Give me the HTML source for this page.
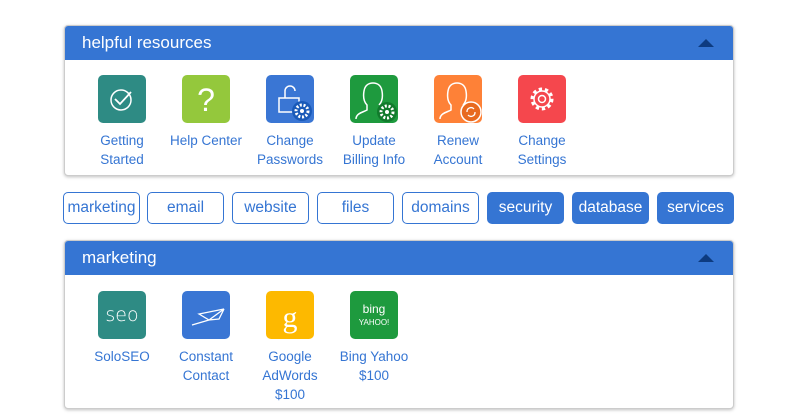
<!DOCTYPE html>
<html><head><style>
*{box-sizing:border-box;margin:0;padding:0}
body{width:800px;height:417px;background:#fff;font-family:"Liberation Sans",sans-serif;position:relative;overflow:hidden}
.panel{position:absolute;left:64px;width:670px;border:1px solid #ccc;border-radius:4px;box-shadow:0 1px 3px rgba(0,0,0,.25);overflow:hidden;background:#fff}
.hd{height:34px;background:#3575d3;color:#fff;font-size:17px;line-height:34px;padding-left:17px;position:relative}
.hd:after{content:"";position:absolute;right:19px;top:13px;border-left:8px solid transparent;border-right:8px solid transparent;border-bottom:8px solid #0d3b80}
.it{position:absolute;width:84px;text-align:center;color:#3575d3;font-size:13.5px;line-height:19px}
.ic{width:48px;height:48px;border-radius:5px;margin:0 auto 8px;position:relative;overflow:hidden}
.ic svg{position:absolute;left:0;top:0}
.btn{position:absolute;top:192px;height:32px;width:77px;border:1px solid #3575d3;border-radius:5px;color:#3575d3;font-size:15.5px;line-height:30px;text-align:center}
.btn.f{background:#3575d3;color:#fff}
</style></head><body>
<div class="panel" style="top:25px;height:151px">
<div class="hd">helpful resources</div>
<div class="it" style="left:15px;top:49px"><div class="ic" style="background:#2e8b84"><svg width="48" height="48"><circle cx="23" cy="25" r="10" fill="none" stroke="#fff" stroke-width="1.5"/><path d="M17 24l5 5 11-12" fill="none" stroke="#fff" stroke-width="1.8"/></svg></div>Getting<br>Started</div>
<div class="it" style="left:99px;top:49px"><div class="ic" style="background:#94c83c"><svg width="48" height="48"><text x="24" y="36" font-size="32" fill="#fff" text-anchor="middle" font-family="Liberation Sans">?</text></svg></div>Help Center</div>
<div class="it" style="left:183px;top:49px"><div class="ic" style="background:#3a76d4"><svg width="48" height="48"><path d="M19 23v-7a5 5 0 0 1 10 0" fill="none" stroke="#fff" stroke-width="1.5"/><rect x="13" y="23" width="20" height="14" fill="none" stroke="#fff" stroke-width="1.5"/><circle cx="36" cy="36" r="10" fill="#1a5ab8"/><circle cx="36" cy="36" r="6" fill="none" stroke="#fff" stroke-width="3" stroke-dasharray="2 1.7"/><circle cx="36" cy="36" r="2" fill="#fff"/></svg></div>Change<br>Passwords</div>
<div class="it" style="left:267px;top:49px"><div class="ic" style="background:#1e9a3e"><svg width="48" height="48"><path d="M6 44c0-6 8-7 11-9v-5c-3-3-4-8-3-14 1-6 5-8 9-8s8 2 9 8c1 6 0 11-3 14" fill="none" stroke="#fff" stroke-width="1.5"/><circle cx="37" cy="37" r="10" fill="#117a2c"/><circle cx="37" cy="37" r="6" fill="none" stroke="#fff" stroke-width="3" stroke-dasharray="2 1.7"/><circle cx="37" cy="37" r="2" fill="#fff"/></svg></div>Update<br>Billing Info</div>
<div class="it" style="left:351px;top:49px"><div class="ic" style="background:#fe8137"><svg width="48" height="48"><path d="M6 44c0-6 8-7 11-9v-5c-3-3-4-8-3-14 1-6 5-8 9-8s8 2 9 8c1 6 0 11-3 14" fill="none" stroke="#fff" stroke-width="1.5"/><circle cx="37" cy="37" r="10" fill="#e86a20" stroke="#fff" stroke-width="1.5"/><path d="M33 37a4 4 0 0 1 7-3M41 37a4 4 0 0 1-7 3" fill="none" stroke="#fff" stroke-width="1.3"/></svg></div>Renew<br>Account</div>
<div class="it" style="left:435px;top:49px"><div class="ic" style="background:#f5474d"><svg width="48" height="48"><circle cx="24" cy="24" r="9" fill="none" stroke="#fff" stroke-width="5" stroke-dasharray="3 2.6"/><circle cx="24" cy="24" r="8" fill="#f5474d" stroke="#fff" stroke-width="1.5"/><circle cx="24" cy="24" r="3.5" fill="none" stroke="#fff" stroke-width="1.5"/></svg></div>Change<br>Settings</div>
</div>
<div class="btn" style="left:63px">marketing</div>
<div class="btn" style="left:147px">email</div>
<div class="btn" style="left:232px">website</div>
<div class="btn" style="left:317px">files</div>
<div class="btn" style="left:402px">domains</div>
<div class="btn f" style="left:487px">security</div>
<div class="btn f" style="left:572px">database</div>
<div class="btn f" style="left:657px">services</div>
<div class="panel" style="top:240px;height:169px">
<div class="hd">marketing</div>
<div class="it" style="left:15px;top:50px"><div class="ic" style="background:#2e8b84"><svg width="48" height="48"><text x="24" y="30" font-size="19" fill="#fff" text-anchor="middle" font-family="DejaVu Sans" font-weight="300">seo</text></svg></div>SoloSEO</div>
<div class="it" style="left:99px;top:50px"><div class="ic" style="background:#3a76d4"><svg width="48" height="48"><path d="M17 23l10 6 15-11zM27 29l-17 5M42 18l-5 10-10 1" fill="none" stroke="#fff" stroke-width="1.3"/></svg></div>Constant<br>Contact</div>
<div class="it" style="left:183px;top:50px"><div class="ic" style="background:#fdb900"><svg width="48" height="48"><text x="24" y="36" font-size="30" fill="#fff" text-anchor="middle" font-family="Liberation Serif">g</text></svg></div>Google<br>AdWords<br>$100</div>
<div class="it" style="left:267px;top:50px"><div class="ic" style="background:#1e9a3e"><svg width="48" height="48"><text x="24" y="22" font-size="12" fill="#fff" text-anchor="middle" font-family="Liberation Sans">bing</text><text x="24" y="34" font-size="8" fill="#fff" text-anchor="middle" font-family="Liberation Sans">YAHOO!</text></svg></div>Bing Yahoo<br>$100</div>
</div>
</body></html>
